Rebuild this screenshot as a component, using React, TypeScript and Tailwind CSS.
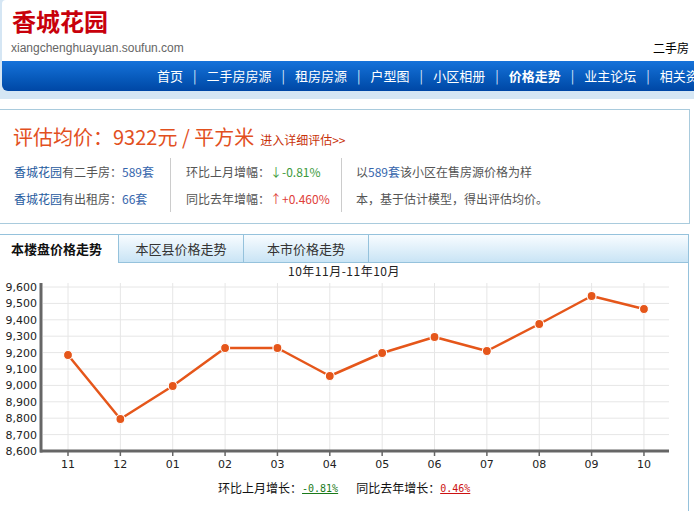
import React from "react";

const cjk = '"Noto Sans CJK SC", "Liberation Sans", sans-serif';

const navItems = ["首页", "二手房房源", "租房房源", "户型图", "小区相册", "价格走势", "业主论坛", "相关资讯"];

const months = ["11", "12", "01", "02", "03", "04", "05", "06", "07", "08", "09", "10"];
const pageYs = [355, 419, 386, 348, 348, 376, 353, 337, 351, 324, 296, 309];
const yLabels = ["9,600", "9,500", "9,400", "9,300", "9,200", "9,100", "9,000", "8,900", "8,800", "8,700", "8,600"];

function Chart() {
  const top = 279;
  const xs = months.map((_, i) => 68 + 52.36 * i);
  const ys = pageYs.map((y) => y - top);
  const gy = (k: number) => 172 - k * 16.4;
  return (
    <svg width={689} height={197} className="block">
      {Array.from({ length: 10 }).map((_, k) => (
        <line key={"h" + k} x1={43} x2={669} y1={gy(k + 1)} y2={gy(k + 1)} stroke="#e6e6e6" strokeWidth={1} />
      ))}
      {xs.map((x, i) => (
        <line key={"v" + i} x1={x} x2={x} y1={4} y2={171} stroke="#e6e6e6" strokeWidth={1} />
      ))}
      <line x1={41} x2={41} y1={4} y2={173.5} stroke="#666" strokeWidth={3} />
      <line x1={40} x2={669} y1={172} y2={172} stroke="#666" strokeWidth={3} />
      {xs.map((x, i) => (
        <line key={"t" + i} x1={x} x2={x} y1={172} y2={177} stroke="#666" strokeWidth={1.5} />
      ))}
      {yLabels.map((l, k) => (
        <text key={l} x={37} y={gy(10 - k) + 4} textAnchor="end" fontSize={11} fill="#222" fontFamily='"DejaVu Sans", Verdana, sans-serif'>
          {l}
        </text>
      ))}
      {months.map((m, i) => (
        <text key={m + i} x={xs[i]} y={189} textAnchor="middle" fontSize={11} fill="#222" fontFamily='"DejaVu Sans", Verdana, sans-serif'>
          {m}
        </text>
      ))}
      <polyline
        points={xs.map((x, i) => `${x},${ys[i]}`).join(" ")}
        fill="none"
        stroke="#e5561a"
        strokeWidth={2.5}
        strokeLinejoin="round"
      />
      {xs.map((x, i) => (
        <circle key={"c" + i} cx={x} cy={ys[i]} r={4.5} fill="#e5561a" stroke="#fff" strokeWidth={1.2} />
      ))}
    </svg>
  );
}

export default function App() {
  return (
    <div className="w-[694px] h-[511px] overflow-hidden bg-white flex flex-col text-[12px] text-[#333]" style={{ fontFamily: cjk }}>
      {/* header */}
      <div className="border-l-2 border-[#d5e6f4] bg-[#d5e6f4]">
        <div className="bg-white rounded-tl-[4px] h-[61px] flex flex-col">
          <div className="pl-[10px] pt-[8px] h-[40px] text-[24px] leading-[26px] font-bold text-[#c8000b]">香城花园</div>
          <div className="flex justify-between items-center h-[16px]">
            <span className="pl-[9px] text-[12px] text-[#666]" style={{ fontFamily: '"Liberation Sans", Arial, sans-serif' }}>
              xiangchenghuayuan.soufun.com
            </span>
            <span className="pr-[5px] text-[12px] text-black">二手房</span>
          </div>
        </div>
        <div className="h-[30px] rounded-bl-[6px] bg-gradient-to-b from-[#1673da] to-[#0047a5] flex items-center whitespace-nowrap overflow-hidden pl-[155px] text-white text-[13px]">
          {navItems.map((n, i) => (
            <React.Fragment key={n}>
              {i > 0 && <span className="mx-[10px] text-[#dce8f8]">|</span>}
              <span className={n === "价格走势" ? "font-bold" : ""}>{n}</span>
            </React.Fragment>
          ))}
        </div>
      </div>
      <div className="h-[8px] bg-[#d5e6f4] shrink-0" />
      <div className="h-[10px] shrink-0" />

      {/* price box */}
      <div className="w-[690px] h-[115px] border border-l-0 border-[#a9cbdd] shrink-0">
        <div className="pl-[13px] pt-[15px] flex items-baseline h-[39px]">
          <span className="text-[20px] leading-[24px] text-[#e2501e]">评估均价：9322元 / 平方米</span>
          <span className="ml-[6px] text-[12px] text-[#c8320a]">进入详细评估&gt;&gt;</span>
        </div>
        <div className="flex mt-[9px] leading-[27px]">
          <div className="w-[170px] pl-[14px] text-[#555]">
            <div>
              <span className="text-[#1f5a9e]">香城花园</span>有二手房：<span className="text-[#3666ad]">589套</span>
            </div>
            <div>
              <span className="text-[#1f5a9e]">香城花园</span>有出租房：<span className="text-[#3666ad]">66套</span>
            </div>
          </div>
          <div className="w-[171px] pl-[15px] border-l border-[#cccccc] text-[#555]">
            <div>
              环比上月增幅：<span className="text-[#3c9a3c]">↓-0.81%</span>
            </div>
            <div>
              同比去年增幅：<span className="text-[#e0403a]">↑+0.460%</span>
            </div>
          </div>
          <div className="flex-1 pl-[14px] border-l border-[#cccccc] text-[#555]">
            <div>
              以<span className="text-[#3666ad]">589套</span>该小区在售房源价格为样
            </div>
            <div>本，基于估计模型，得出评估均价。</div>
          </div>
        </div>
      </div>

      {/* tabs */}
      <div className="mt-[10px] w-[689px] flex-1 flex flex-col">
        <div className="flex h-[29px] shrink-0 text-[13px]">
          <div className="w-[118px] border-t border-[#95c2dc] bg-white pl-[11px] flex items-center font-bold text-[#111]">本楼盘价格走势</div>
          <div className="w-[125px] border-t border-l border-b border-[#95c2dc] bg-gradient-to-b from-[#f8fcff] to-[#c9e4f5] flex items-center justify-center text-[#333]">本区县价格走势</div>
          <div className="w-[125px] border-t border-l border-b border-[#95c2dc] bg-gradient-to-b from-[#f8fcff] to-[#c9e4f5] flex items-center justify-center text-[#333]">本市价格走势</div>
          <div className="flex-1 border-t border-l border-b border-r border-[#95c2dc] bg-gradient-to-b from-[#f8fcff] to-[#c9e4f5]" />
        </div>
        <div className="flex-1 border-r border-[#95c2dc] flex flex-col">
          <div className="h-[16px] leading-[16px] text-center text-[12px] text-[#222] tracking-[0.5px]">10年11月-11年10月</div>
          <Chart />
          <div className="h-[24px] flex items-center pl-[218px] text-[12px] text-[#111]">
            <span>环比上月增长：</span>
            <span className="underline text-[#1a7a1a] text-[10px]" style={{ fontFamily: '"DejaVu Sans Mono", monospace' }}>-0.81%</span>
            <span className="ml-[18px]">同比去年增长：</span>
            <span className="underline text-[#cc1111] text-[10px]" style={{ fontFamily: '"DejaVu Sans Mono", monospace' }}>0.46%</span>
          </div>
        </div>
      </div>
    </div>
  );
}
